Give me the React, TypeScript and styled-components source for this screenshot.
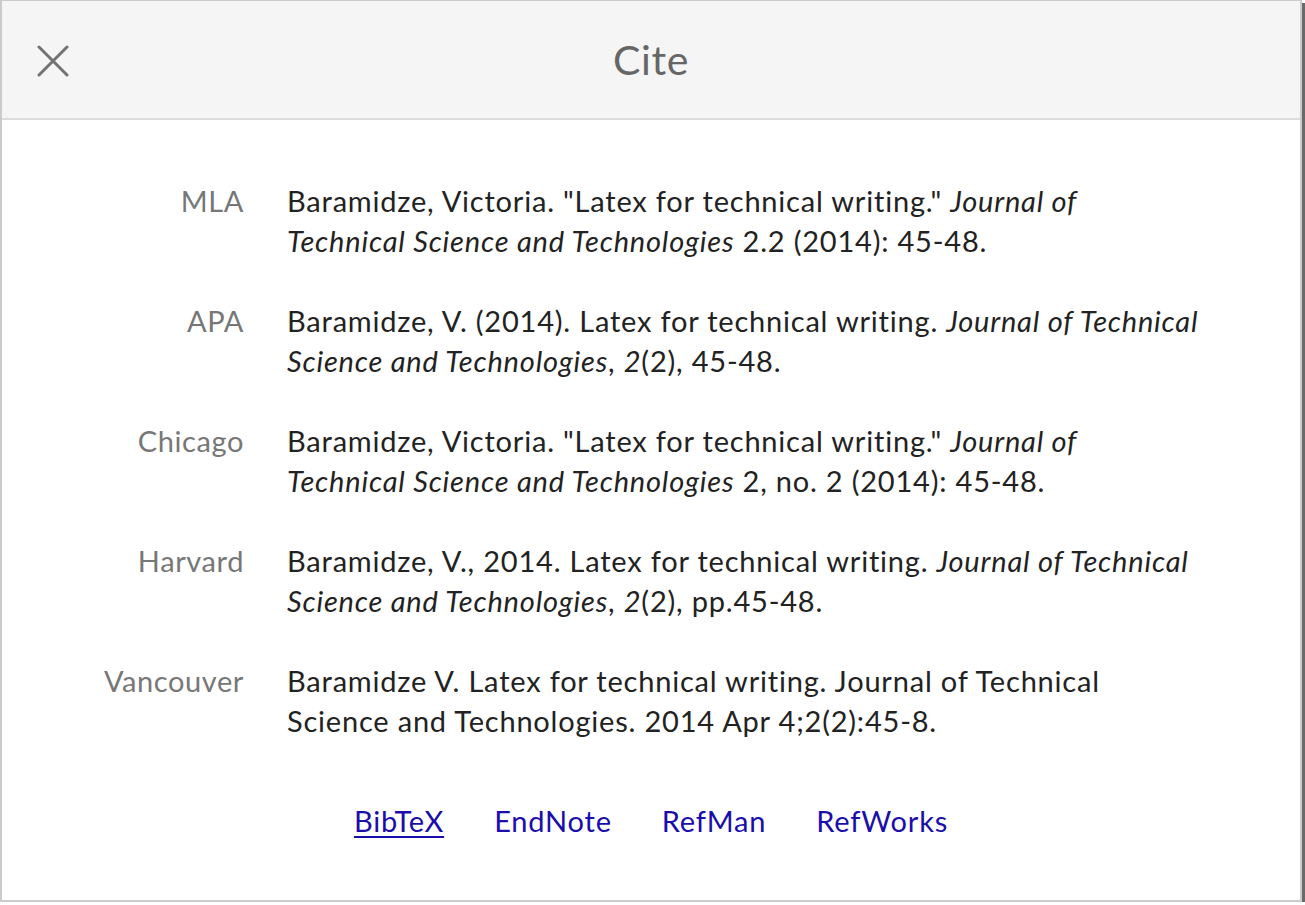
import React from 'react';
import styled, { createGlobalStyle } from 'styled-components';

const GlobalStyle = createGlobalStyle`
  html, body {
    margin: 0;
    padding: 0;
    background: #fff;
  }
  body {
    font-family: Lato, 'Noto Sans', sans-serif;
  }
`;

type Citation = {
  style: string;
  text: React.ReactNode;
};

const citations: Citation[] = [
  {
    style: 'MLA',
    text: (
      <>
        Baramidze, Victoria. "Latex for technical writing." <i>Journal of Technical Science and Technologies</i> 2.2
        (2014): 45-48.
      </>
    ),
  },
  {
    style: 'APA',
    text: (
      <>
        Baramidze, V. (2014). Latex for technical writing. <i>Journal of Technical Science and Technologies</i>,{' '}
        <i>2</i>(2), 45-48.
      </>
    ),
  },
  {
    style: 'Chicago',
    text: (
      <>
        Baramidze, Victoria. "Latex for technical writing." <i>Journal of Technical Science and Technologies</i> 2, no.
        2 (2014): 45-48.
      </>
    ),
  },
  {
    style: 'Harvard',
    text: (
      <>
        Baramidze, V., 2014. Latex for technical writing. <i>Journal of Technical Science and Technologies</i>,{' '}
        <i>2</i>(2), pp.45-48.
      </>
    ),
  },
  {
    style: 'Vancouver',
    text: (
      <>
        Baramidze V. Latex for technical writing. Journal of Technical Science and Technologies. 2014 Apr
        4;2(2):45-8.
      </>
    ),
  },
];

const exports = ['BibTeX', 'EndNote', 'RefMan', 'RefWorks'];

const Dialog = styled.div`
  box-sizing: border-box;
  width: 1302px;
  height: 902px;
  border: 2px solid #cbcbcb;
  border-top-width: 1px;
  box-shadow: 3px 3px 0 #6a6a6a;
  background: #fff;
  display: flex;
  flex-direction: column;
`;

const Header = styled.header`
  height: 117px;
  background: #f5f5f5;
  border-bottom: 2px solid #dcdcdc;
  display: grid;
  grid-template-columns: 1fr auto 1fr;
  align-items: center;
`;

const CloseButton = styled.button`
  justify-self: start;
  margin-left: 35px;
  width: 32px;
  height: 32px;
  padding: 0;
  border: 0;
  background: none;
  cursor: pointer;
  display: flex;
  margin-top: 2px;
`;

const Title = styled.h1`
  margin: 0;
  font-size: 41px;
  font-weight: 400;
  color: #666;
  letter-spacing: 0.6px;
`;

const Body = styled.main`
  padding-top: 61px;
`;

const Table = styled.div`
  display: grid;
  grid-template-columns: 242px 1fr;
  column-gap: 43px;
  row-gap: 40px;
  margin-right: 100px;
  font-size: 29px;
  line-height: 40px;
  letter-spacing: 0.8px;
`;

const Label = styled.div`
  text-align: right;
  color: #777;
  letter-spacing: 0.6px;
`;

const Entry = styled.div`
  color: #222;
`;

const Links = styled.nav`
  display: flex;
  justify-content: center;
  gap: 50px;
  margin-top: 60px;
  font-size: 29px;
  line-height: 40px;
  letter-spacing: 0.8px;
`;

const ExportLink = styled.a<{ $active?: boolean }>`
  color: #1a0dab;
  text-decoration: ${(p) => (p.$active ? 'underline' : 'none')};
  text-underline-offset: 4px;
  text-decoration-thickness: 2px;
`;

const CloseIcon = () => (
  <svg width="32" height="32" viewBox="0 0 32 32" fill="none">
    <path d="M2 2 L30 30 M30 2 L2 30" stroke="#727272" strokeWidth="3" strokeLinecap="round" />
  </svg>
);

export default function App() {
  return (
    <>
      <GlobalStyle />
      <Dialog>
        <Header>
          <CloseButton aria-label="Close">
            <CloseIcon />
          </CloseButton>
          <Title>Cite</Title>
          <span />
        </Header>
        <Body>
          <Table>
            {citations.map((c) => (
              <React.Fragment key={c.style}>
                <Label>{c.style}</Label>
                <Entry>{c.text}</Entry>
              </React.Fragment>
            ))}
          </Table>
          <Links>
            {exports.map((name, i) => (
              <ExportLink key={name} href="#" $active={i === 0}>
                {name}
              </ExportLink>
            ))}
          </Links>
        </Body>
      </Dialog>
    </>
  );
}
